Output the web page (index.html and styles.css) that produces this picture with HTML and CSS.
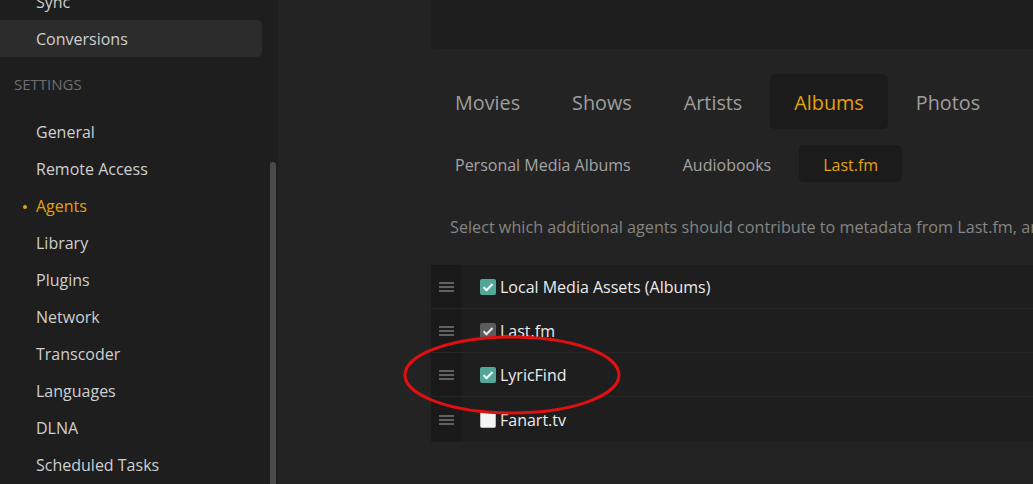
FILE: index.html
```html
<!DOCTYPE html>
<html lang="en">
<head>
<meta charset="utf-8">
<title>Agents - Settings</title>
<link rel="stylesheet" href="styles.css">
</head>
<body>
<div class="app">
  <aside class="sidebar">
    <ul class="nav nav-top">
      <li class="nav-item">Sync</li>
      <li class="nav-item selected">Conversions</li>
    </ul>
    <div class="nav-heading">Settings</div>
    <ul class="nav">
      <li class="nav-item">General</li>
      <li class="nav-item">Remote Access</li>
      <li class="nav-item active">Agents</li>
      <li class="nav-item">Library</li>
      <li class="nav-item">Plugins</li>
      <li class="nav-item">Network</li>
      <li class="nav-item">Transcoder</li>
      <li class="nav-item">Languages</li>
      <li class="nav-item">DLNA</li>
      <li class="nav-item">Scheduled Tasks</li>
    </ul>
    <div class="scroll-thumb"></div>
  </aside>
  <main class="content">
    <div class="top-card"></div>
    <nav class="tabs">
      <span class="tab">Movies</span>
      <span class="tab">Shows</span>
      <span class="tab">Artists</span>
      <span class="tab current">Albums</span>
      <span class="tab">Photos</span>
    </nav>
    <nav class="subtabs">
      <span class="subtab">Personal Media Albums</span>
      <span class="subtab">Audiobooks</span>
      <span class="subtab current">Last.fm</span>
    </nav>
    <p class="desc">Select which additional agents should contribute to metadata from Last.fm, and in which order they should be applied.</p>
    <ul class="agents">
      <li class="agent">
        <span class="handle"><svg width="15" height="10" viewBox="0 0 15 10"><path d="M0 1h15M0 5h15M0 9h15" stroke="#7a7a7a" stroke-width="1.6"/></svg></span>
        <span class="check on"><svg width="16" height="16" viewBox="0 0 16 16"><path d="M3.5 8.3l3 3 6-6.3" fill="none" stroke="#fff" stroke-width="2"/></svg></span>
        <span class="agent-name">Local Media Assets (Albums)</span>
      </li>
      <li class="agent">
        <span class="handle"><svg width="15" height="10" viewBox="0 0 15 10"><path d="M0 1h15M0 5h15M0 9h15" stroke="#7a7a7a" stroke-width="1.6"/></svg></span>
        <span class="check disabled"><svg width="16" height="16" viewBox="0 0 16 16"><path d="M3.5 8.3l3 3 6-6.3" fill="none" stroke="#e6e6e6" stroke-width="2"/></svg></span>
        <span class="agent-name">Last.fm</span>
      </li>
      <li class="agent">
        <span class="handle"><svg width="15" height="10" viewBox="0 0 15 10"><path d="M0 1h15M0 5h15M0 9h15" stroke="#7a7a7a" stroke-width="1.6"/></svg></span>
        <span class="check on"><svg width="16" height="16" viewBox="0 0 16 16"><path d="M3.5 8.3l3 3 6-6.3" fill="none" stroke="#fff" stroke-width="2"/></svg></span>
        <span class="agent-name">LyricFind</span>
      </li>
      <li class="agent">
        <span class="handle"><svg width="15" height="10" viewBox="0 0 15 10"><path d="M0 1h15M0 5h15M0 9h15" stroke="#7a7a7a" stroke-width="1.6"/></svg></span>
        <span class="check off"></span>
        <span class="agent-name">Fanart.tv</span>
      </li>
    </ul>
  </main>
  <svg class="annotation" width="230" height="90" viewBox="0 0 230 90">
    <ellipse cx="115" cy="45" rx="107" ry="38" fill="none" stroke="#e01010" stroke-width="3"/>
  </svg>
</div>
</body>
</html>
```

FILE: styles.css
```css
* { box-sizing: border-box; }
html, body {
  margin: 0;
  padding: 0;
  height: 100%;
  overflow: hidden;
  background: #232323;
  font-family: "Open Sans", "Noto Sans", "Liberation Sans", sans-serif;
}
.app {
  position: relative;
  display: flex;
  width: 1033px;
  height: 484px;
  overflow: hidden;
}
.sidebar {
  position: relative;
  flex: 0 0 278px;
  background: #1e1e1e;
  height: 100%;
}
.nav {
  list-style: none;
  margin: 0;
  padding: 0;
}
.nav-top { margin-top: -17px; }
.nav-item {
  height: 37px;
  line-height: 39px;
  padding-left: 36px;
  width: 262px;
  font-size: 16px;
  color: #cfcfcf;
  border-radius: 0 5px 5px 0;
  position: relative;
}
.nav-item.selected { background: #2c2c2c; }
.nav-item.active { color: #e5a00d; }
.nav-item.active::before {
  content: "";
  position: absolute;
  left: 23px;
  top: 18px;
  width: 4px;
  height: 4px;
  border-radius: 50%;
  background: #e5a00d;
}
.nav-heading {
  height: 56px;
  line-height: 54px;
  padding-left: 14px;
  font-size: 15px;
  color: #6e6e6e;
  text-transform: uppercase;
}
.scroll-thumb {
  position: absolute;
  left: 270px;
  top: 162px;
  width: 6px;
  height: 340px;
  border-radius: 3px;
  background: #4a4a4a;
}
.content {
  flex: 0 0 auto;
  width: 900px;
  padding-left: 153px;
}
.top-card {
  height: 49px;
  background: #1e1e1e;
  border-radius: 0 0 0 4px;
}
.tabs {
  display: flex;
  gap: 4px;
  margin-top: 25px;
  height: 55px;
}
.tab {
  padding: 0 24px;
  height: 55px;
  line-height: 57px;
  font-size: 19.8px;
  color: #9e9e9e;
  border-radius: 5px;
  white-space: nowrap;
}
.tab.current, .subtab.current {
  background: #1b1b1b;
  color: #e5a00d;
}
.subtabs {
  display: flex;
  gap: 4px;
  margin-top: 16px;
  height: 37px;
}
.subtab {
  padding: 0 24px;
  height: 37px;
  line-height: 40px;
  font-size: 16px;
  color: #a3a3a3;
  border-radius: 5px;
  white-space: nowrap;
}
.desc {
  margin: 33px 0 26px;
  padding-left: 19px;
  height: 24px;
  line-height: 24px;
  font-size: 16.2px;
  color: #858585;
  white-space: nowrap;
}
.agents {
  list-style: none;
  margin: 0;
  padding: 0;
  background: #1e1e1e;
}
.agent {
  display: flex;
  align-items: center;
  height: 44px;
  border-bottom: 1px solid #262626;
}
.agent:last-child { border-bottom: none; height: 45px; }
.handle {
  flex: 0 0 31px;
  align-self: stretch;
  display: flex;
  align-items: center;
  justify-content: center;
  background: #1a1a1a;
}
.handle svg { display: block; }
.check {
  margin-left: 18px;
  width: 16px;
  height: 16px;
  border-radius: 2px;
  display: flex;
}
.check.on { background: #52a898; }
.check.disabled { background: #5c5c5c; }
.check.off { background: #f4f4f4; border: 1px solid #bbb; }
.agent-name {
  margin-left: 4px;
  font-size: 16px;
  color: #ececec;
  white-space: nowrap;
}
.annotation {
  position: absolute;
  left: 397px;
  top: 330px;
  pointer-events: none;
}
```
